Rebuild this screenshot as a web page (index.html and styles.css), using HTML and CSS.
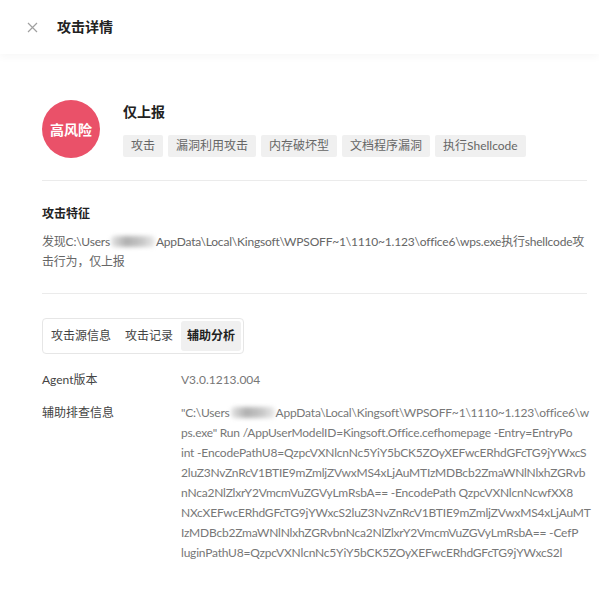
FILE: index.html
```html
<!DOCTYPE html>
<html lang="zh-CN">
<head>
<meta charset="utf-8">
<title>攻击详情</title>
<link rel="stylesheet" href="styles.css">
</head>
<body>
<header class="header">
  <svg class="close" width="11" height="11" viewBox="0 0 11 11"><path d="M1 1 L10 10 M10 1 L1 10" stroke="#a0a0a0" stroke-width="1.2" fill="none"/></svg>
  <h1 class="title">攻击详情</h1>
</header>
<main class="content">
  <section class="summary">
    <div class="avatar">高风险</div>
    <div class="info">
      <div class="name">仅上报</div>
      <div class="tags">
        <span class="tag">攻击</span>
        <span class="tag">漏洞利用攻击</span>
        <span class="tag">内存破坏型</span>
        <span class="tag">文档程序漏洞</span>
        <span class="tag">执行Shellcode</span>
      </div>
    </div>
  </section>
  <section class="feature">
    <h2 class="sub-title">攻击特征</h2>
    <p class="desc">发现C:\Users<span class="blur" aria-hidden="true"></span>AppData\Local\Kingsoft\WPSOFF~1\1110~1.123\office6\wps.exe执行shellcode攻击行为，仅上报</p>
  </section>
  <section class="analysis">
    <div class="tabs">
      <span class="tab">攻击源信息</span>
      <span class="tab">攻击记录</span>
      <span class="tab active">辅助分析</span>
    </div>
    <div class="row">
      <div class="label">Agent版本</div>
      <div class="value">V3.0.1213.004</div>
    </div>
    <div class="row">
      <div class="label">辅助排查信息</div>
      <div class="value mono-lines">
        <span class="line">"C:\Users<span class="blur" aria-hidden="true"></span>AppData\Local\Kingsoft\WPSOFF~1\1110~1.123\office6\w</span>
        <span class="line">ps.exe" Run /AppUserModelID=Kingsoft.Office.cefhomepage -Entry=EntryPo</span>
        <span class="line">int -EncodePathU8=QzpcVXNlcnNc5YiY5bCK5ZOyXEFwcERhdGFcTG9jYWxcS</span>
        <span class="line">2luZ3NvZnRcV1BTIE9mZmljZVwxMS4xLjAuMTIzMDBcb2ZmaWNlNlxhZGRvb</span>
        <span class="line">nNca2NlZlxrY2VmcmVuZGVyLmRsbA== -EncodePath QzpcVXNlcnNcwfXX8</span>
        <span class="line">NXcXEFwcERhdGFcTG9jYWxcS2luZ3NvZnRcV1BTIE9mZmljZVwxMS4xLjAuMT</span>
        <span class="line">IzMDBcb2ZmaWNlNlxhZGRvbnNca2NlZlxrY2VmcmVuZGVyLmRsbA== -CefP</span>
        <span class="line">luginPathU8=QzpcVXNlcnNc5YiY5bCK5ZOyXEFwcERhdGFcTG9jYWxcS2l</span>
      </div>
    </div>
  </section>
</main>
</body>
</html>
```
FILE: styles.css
```css
* { box-sizing: border-box; }
html, body { margin: 0; padding: 0; background: #fff; }
body {
  font-family: Lato, "Noto Sans CJK SC", sans-serif;
  font-size: 12px;
  color: #666;
}
.header {
  height: 54px;
  display: flex;
  align-items: center;
  padding-left: 27px;
  box-shadow: 0 3px 8px rgba(0, 0, 0, 0.035);
}
.close { margin-right: 19px; }
.title {
  margin: 0;
  font-size: 14px;
  font-weight: 700;
  color: #222;
  line-height: 20px;
}
.content { padding: 0 12px 0 42px; }
.summary {
  display: flex;
  padding-top: 46px;
  padding-bottom: 22px;
  border-bottom: 1px solid #ebebeb;
}
.avatar {
  width: 58px;
  height: 58px;
  border-radius: 50%;
  background: #ea5169;
  color: #fff;
  font-size: 14px;
  font-weight: 700;
  display: flex;
  align-items: center;
  justify-content: center;
  flex: none;
}
.info { margin-left: 23px; padding-top: 2px; }
.name {
  font-size: 14px;
  font-weight: 700;
  color: #222;
  line-height: 20px;
}
.tags { display: flex; gap: 5px; margin-top: 13px; }
.tag {
  height: 22px;
  line-height: 22px;
  padding: 0 8px;
  background: #f0f0f0;
  color: #666;
  border-radius: 2px;
}
.feature {
  padding-top: 23px;
  padding-bottom: 21px;
  border-bottom: 1px solid #ebebeb;
}
.sub-title {
  margin: 0;
  font-size: 12px;
  font-weight: 700;
  color: #222;
  line-height: 20px;
}
.desc {
  margin: 8px 0 0;
  line-height: 20px;
  color: #666;
  word-break: break-all;
  letter-spacing: -0.2px;
}
.blur {
  display: inline-block;
  width: 44px;
  height: 11px;
  margin: 0 1px;
  vertical-align: -1px;
  border-radius: 4px;
  background: linear-gradient(90deg, rgba(150,150,150,0.25), rgba(110,110,110,0.55) 35%, rgba(130,130,130,0.45) 70%, rgba(160,160,160,0.2));
  filter: blur(2px);
}
.analysis { padding-top: 24px; padding-bottom: 20px; }
.tabs {
  display: inline-flex;
  gap: 2px;
  padding: 2px;
  border: 1px solid #e6e6e6;
  border-radius: 4px;
}
.tab {
  height: 30px;
  line-height: 30px;
  padding: 0 6px;
  color: #444;
  border-radius: 3px;
}
.tab.active {
  background: #f0f0f0;
  color: #222;
  font-weight: 700;
}
.row { display: flex; margin-top: 16px; line-height: 20px; }
.row + .row { margin-top: 13px; }
.label { width: 139px; flex: none; color: #444; }
.value { color: #777; }
.mono-lines { display: flex; flex-direction: column; }
.line { white-space: nowrap; letter-spacing: -0.2px; }
```
